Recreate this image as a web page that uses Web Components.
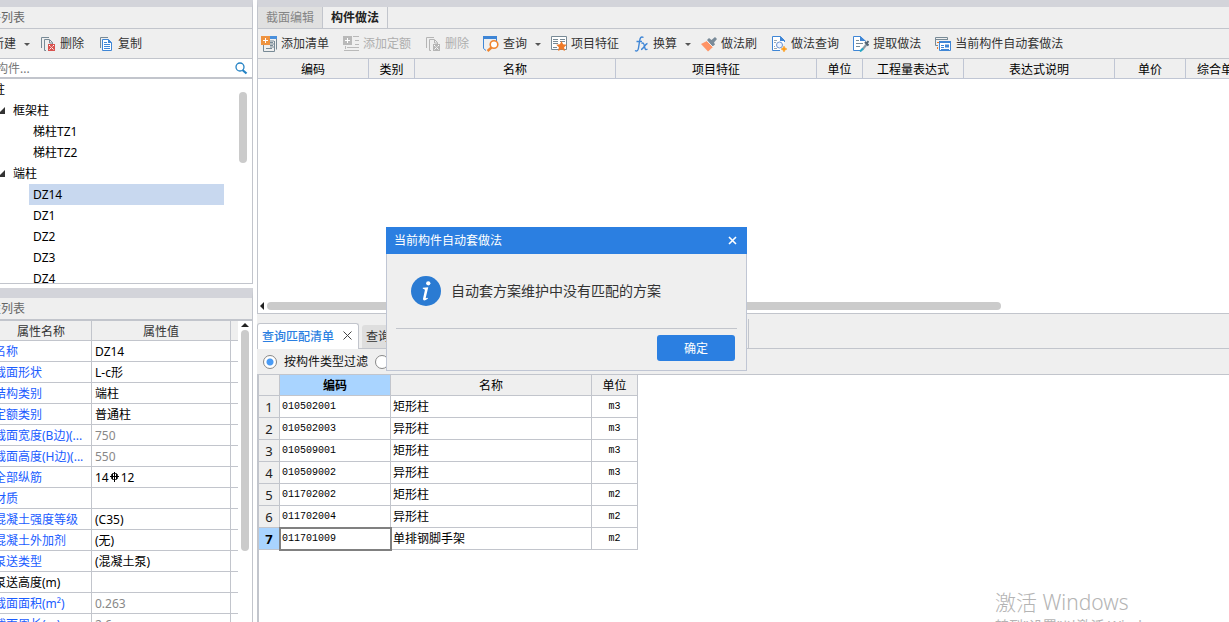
<!DOCTYPE html>
<html lang="zh-CN">
<head>
<meta charset="utf-8">
<title>构件做法</title>
<style>
  body {
    --bar: #d3d4da;
    --panel: #efefef;
    --line: #c2c5cc;
    --grid: #c0c6d4;
    --accent: #2b7fe1;
    --thumb: #cbcbcb;
    margin: 0;
    overflow: hidden;
    background: #fff;
    color: #333;
    font: 12px/20px "Noto Sans", "Noto Sans CJK SC", sans-serif;
  }
</style>
</head>
<body>
<takeoff-app></takeoff-app>

<script>
const ICONS = {
  'add-list': `
    <path d="M9 1.5h6.5v10M13 5H9M13 8H9M13 11H9" fill="none" stroke="#788a96"/>
    <path d="M9 0h7v3H9z" fill="#4a90dc"/>
    <path d="M2.5 9v6.5h11V5M15.5 4v9.5" fill="none" stroke="#788a96"/>
    <path d="M5 12.5h6M9 9.5h3M9 6.5h3" stroke="#788a96"/>
    <path d="M0 0h9v9H0z" fill="#ef9340"/>
    <path d="M4.5 2v5M2 4.5h5" stroke="#fff"/>`,
  'add-quota': `
    <path d="M0 0h9v9H0z" fill="#b9b9b9"/>
    <path d="M4.5 2v5M2 4.5h5" stroke="#fff"/>
    <path d="M10 .5h6M12 4.5h4M12 8.5h4M4 11.5h12M1 14.5h15M2.5 10v3" stroke="#b9b9b9" fill="none"/>`,
  remove: `
    <path d="M1.5 12V1.5H9" fill="none" stroke="#788a96"/>
    <path d="M6 14.5H4.5v-11h5l3 3V8M9.5 4v3h3" fill="none" stroke="#788a96"/>
    <path d="M8 8h7v7H8z" fill="#d9534f"/>
    <path d="M9 9l5 5M14 9l-5 5" stroke="#fff" stroke-dasharray="1.4 .7"/>`,
  'remove-off': `
    <path d="M1.5 12V1.5H9" fill="none" stroke="#b5b5b5"/>
    <path d="M6 14.5H4.5v-11h5l3 3V8M9.5 4v3h3" fill="none" stroke="#b5b5b5"/>
    <path d="M8 8h7v7H8z" fill="#b5b5b5"/>
    <path d="M9 9l5 5M14 9l-5 5" stroke="#fff" stroke-dasharray="1.4 .7"/>`,
  copy: `
    <path d="M2.5 12V1.5H10" fill="none" stroke="#788a96"/>
    <path d="M4.5 3.5h6l3 3v8h-9z" fill="#fff" stroke="#3f86d6"/>
    <path d="M10 3v4h4z" fill="#3f86d6"/>
    <path d="M6 6.5h3M6 8.5h6M6 10.5h6M6 12.5h6" stroke="#3f86d6"/>`,
  query: `
    <path d="M0 0h14v3H0z" fill="#3f86d6"/>
    <path d="M.5 3v9.5L3 14.5M13.5 3v2" fill="none" stroke="#3f86d6"/>
    <circle cx="11" cy="8.5" r="3.8" fill="#fff" stroke="#f0852f" stroke-width="1.6"/>
    <path d="M8.5 11.5L4.500 15" stroke="#f0852f" stroke-width="2.4"/>`,
  feature: `
    <path d="M.5.5h15v13H.5z" fill="#fff" stroke="#788a96"/>
    <path d="M2 3.5h5M2 5.5h5M2 7.5h5M2 11.5h4M9 3.5h5M9 5.5h5" stroke="#788a96"/>
    <path d="M10.5 5l1.6 3.3 3.7.4-2.7 2.5.8 3.7-3.4-1.7L7.100 15l.8-3.8L5.200 8.700l3.7-.4z" fill="#ef7a28"/>`,
  convert: `
    <path d="M10.5 1.500C8 0 7 2 6.600 5L5.500 12c-.4 3-1.8 3.5-3.5 2.5M3.500 5.500H9" fill="none" stroke="#3f86d6" stroke-width="1.4"/>
    <path d="M8.5 7.500c2-1.500 2.500.5 3 3s1 4 3 2.500M14.500 7.500c-2 0-4.500 6-6.500 6" fill="none" stroke="#3f86d6" stroke-width="1.3"/>`,
  brush: `
    <path d="M0 8l6-3 6 6-5 4.500z" fill="#ff9466"/>
    <path d="M6 4l2-2 2.500 2L14 1l2 2-3 3.500 1 2-2.500 2z" fill="#7a8b99"/>
    <path d="M5.500 4.500l6.500 6.500" stroke="#efefef"/>`,
  'method-query': `
    <path d="M13.500 6V4.500l-4-4h-8v14H9" fill="#fff" stroke="#3f86d6"/>
    <path d="M9 0v5h5z" fill="#3f86d6"/>
    <path d="M3 4.500h3M3 6.500h2M3 10.500h1M3 12.500h3" stroke="#9aa7b1"/>
    <circle cx="8.500" cy="9" r="3" fill="#eef4ff" stroke="#6c93cf"/>
    <path d="M13 10l1 2 2 1-2 1-1 2-1-2-2-1 2-1z" fill="#ff9d18" stroke="#ff9d18" stroke-width=".5"/>`,
  extract: `
    <path d="M8 14.500H.5V.5h7l5 5" fill="#fff" stroke="#3f86d6"/>
    <path d="M7 0v5h6z" fill="#3f86d6"/>
    <path d="M3 4.500h3M3 7.500h7M3 10.500h4" stroke="#788a96"/>
    <path d="M9 14l5-6" stroke="#8b9ba7" stroke-width="2"/>
    <path d="M12 6l3.500 3.500M13.500 7.500L15.500 5" stroke="#536471" stroke-width="2"/>
    <path d="M7 15.500l3-3" stroke="#25a7c7" stroke-width="2"/>`,
  auto: `
    <path d="M12.500 4V1.500H.5v8H3M1 3.500h11" fill="none" stroke="#788a96"/>
    <path d="M2 6.500h2M2.500 11v2" stroke="#ef7a28"/>
    <path d="M4.500 5.500h11v9h-11z" fill="#fff" stroke="#3f86d6"/>
    <path d="M4 5h12v2H4zM10 8.500h4v3h-4z" fill="#3f86d6"/>
    <path d="M6 9.500h3M6 11.500h3M6 13.500h8" stroke="#3f86d6"/>`,
  search: `
    <circle cx="7" cy="7" r="4" fill="none" stroke="#2583c5" stroke-width="1.3"/>
    <path d="M9.500 10l4 3.500" stroke="#2583c5" stroke-width="2.2"/>`,
  rebar: `
    <path d="M7.500 3v10M3 7.500h9M5.500 5v5M9.500 5v5" stroke="#000" fill="none"/>
    <rect x="4.500" y="4.500" width="6" height="6" rx="2" stroke="#000" fill="none"/>`,
  info: `
    <circle cx="8" cy="8" r="8" fill="#2a7bd3"/>
    <circle cx="9.200" cy="3.900" r="1.150" fill="#fff"/>
    <path d="M6.300 6.300l2.900-.3-1.300 5.400q-.2.800.8.200l.4.400q-2.700 2.100-2.700.1l1-4.500q.1-.8-1.100-.8z" fill="#fff"/>`,
};

function define(name, css, html, ready) {
  const template = document.createElement('template');
  template.innerHTML = `<style>* { box-sizing: border-box; } ${css}</style>${html}`;

  customElements.define(name, class extends HTMLElement {
    constructor() {
      super();
      this.attachShadow({ mode: 'open' }).appendChild(template.content.cloneNode(true));
    }

    connectedCallback() {
      if (ready) ready(this, this.shadowRoot);
    }
  });
}

define('ui-icon', `
  :host { display: inline-block; flex: none; width: 16px; height: 16px; }
  svg { display: block; width: 100%; height: 100%; }
`, `<svg viewBox="0 0 16 16" aria-hidden="true"></svg>`, (el, root) => {
  root.querySelector('svg').innerHTML = ICONS[el.getAttribute('name')] || '';
});

define('tool-button', `
  :host { display: block; flex: none; }
  button {
    display: flex;
    align-items: center;
    gap: 4px;
    padding: 0;
    border: 0;
    background: none;
    color: inherit;
    font: inherit;
    white-space: nowrap;
  }
  button:disabled { color: #aeaeae; }
  .caret { display: none; }
  :host([menu]) .caret {
    display: block;
    margin: 2px -4px 0 4px;
    border: 3px solid transparent;
    border-top-color: #555;
    border-bottom: 0;
  }
`, `<button type="button"><span class="icon"></span><slot></slot><span class="caret"></span></button>`, (el, root) => {
  const icon = document.createElement('ui-icon');
  icon.setAttribute('name', el.getAttribute('icon') || '');
  root.querySelector('.icon').replaceWith(icon);
  root.querySelector('button').disabled = el.hasAttribute('disabled');
});

define('tool-bar', `
  :host {
    display: flex;
    flex: none;
    align-items: center;
    gap: 14px;
    height: 30px;
    padding: 0 3px;
    overflow: hidden;
    background: var(--panel);
    border-bottom: 1px solid var(--line);
  }
`, `<slot></slot>`);

define('panel-title', `
  :host {
    display: block;
    flex: none;
    height: 22px;
    padding-left: 9px;
    background: var(--panel);
    border-bottom: 1px solid var(--line);
    color: #666;
    line-height: 22px;
  }
`, `<slot></slot>`);

define('scroll-thumb', `
  :host { display: block; border-radius: 4px; background: var(--thumb); }
`, ``);

define('component-tree', `
  :host { display: flex; flex: 1; min-height: 0; overflow: hidden; color: #000; }
  ul { flex: 1; margin: 0; padding: 0 0 0 61px; list-style: none; }
  li { height: 21px; padding: 0 4px; line-height: 21px; }
  .root { margin-left: -40px; }
  .group { display: flex; align-items: center; gap: 8px; margin-left: -35px; }
  .group::before {
    content: "";
    border-left: 7px solid transparent;
    border-bottom: 7px solid #333;
  }
  .selected { background: #c8d8ef; }
  scroll-thumb { flex: none; width: 8px; height: 71px; margin: 13px 5px 0 15px; }
`, `
  <ul>
    <li class="root">柱</li>
    <li class="group">框架柱</li>
    <li>梯柱TZ1</li>
    <li>梯柱TZ2</li>
    <li class="group">端柱</li>
    <li class="selected">DZ14</li>
    <li>DZ1</li>
    <li>DZ2</li>
    <li>DZ3</li>
    <li>DZ4</li>
  </ul>
  <scroll-thumb></scroll-thumb>
`);

define('component-panel', `
  :host {
    display: flex;
    flex-direction: column;
    min-height: 0;
    border-top: 7px solid var(--bar);
    border-right: 1px solid var(--line);
    border-bottom: 1px solid var(--line);
  }
  .search {
    display: flex;
    flex: none;
    align-items: center;
    height: 20px;
    padding: 0 3px 0 4px;
    border-bottom: 2px solid var(--line);
  }
  input {
    flex: 1;
    height: 18px;
    padding: 2px 0 0;
    border: 0;
    outline: 0;
    background: none;
    font: inherit;
  }
  input::placeholder { color: #777; }
  tool-bar { padding: 0 4px; }
`, `
  <panel-title>构件列表</panel-title>
  <tool-bar>
    <tool-button menu>新建</tool-button>
    <tool-button icon="remove">删除</tool-button>
    <tool-button icon="copy">复制</tool-button>
  </tool-bar>
  <div class="search">
    <input type="text" placeholder="搜索构件..." aria-label="搜索构件">
    <ui-icon name="search"></ui-icon>
  </div>
  <component-tree></component-tree>
`);

const PROPERTIES = [
  ['名称', 'DZ14'],
  ['截面形状', 'L-c形'],
  ['结构类别', '端柱'],
  ['定额类别', '普通柱'],
  ['截面宽度(B边)(...', '750', 'fixed'],
  ['截面高度(H边)(...', '550', 'fixed'],
  ['全部纵筋', '14<ui-icon name="rebar"></ui-icon>12'],
  ['材质', ''],
  ['混凝土强度等级', '(C35)'],
  ['混凝土外加剂', '(无)'],
  ['泵送类型', '(混凝土泵)'],
  ['泵送高度(m)', '', 'plain'],
  ['截面面积(m²)', '0.263', 'fixed'],
  ['截面周长(m)', '2.6', 'fixed'],
];

define('property-panel', `
  :host {
    display: flex;
    flex-direction: column;
    min-height: 0;
    overflow: hidden;
    border-top: 10px solid var(--bar);
    border-right: 1px solid var(--line);
  }
  panel-title { height: 23px; border-bottom-width: 2px; }
  .body { display: flex; min-height: 0; }
  table {
    flex: 1;
    table-layout: fixed;
    border-collapse: separate;
    border-spacing: 0;
    color: #000;
  }
  .no { width: 23px; }
  .name { width: 101px; }
  .end { width: 7px; }
  th, td {
    height: 21px;
    padding: 2px 3px 0;
    border-bottom: 1px solid var(--line);
    line-height: 18px;
    text-align: left;
    font-weight: 400;
    white-space: nowrap;
    overflow: hidden;
  }
  thead th {
    height: 20px;
    line-height: 17px;
    background: var(--panel);
    color: #333;
    text-align: center;
  }
  th:nth-child(2), td:nth-child(3) { border-right: 1px solid var(--line); }
  thead th:nth-child(3) { border-right: 1px solid var(--line); }
  tbody th { color: #1a5cff; }
  .plain th { color: #000; }
  .fixed td { color: #888; }
  td ui-icon { margin: -2px; vertical-align: -1px; }
  .scroll { flex: none; width: 14px; padding: 2px 3px; }
  .scroll::before {
    content: "";
    display: block;
    margin-bottom: 3px;
    border: 4px solid transparent;
    border-top: 0;
    border-bottom-color: #222;
  }
  scroll-thumb { height: 221px; }
`, `
  <panel-title>属性列表</panel-title>
  <div class="body">
    <table>
      <colgroup><col class="no"><col class="name"><col><col class="end"></colgroup>
      <thead><tr><th></th><th>属性名称</th><th>属性值</th><th></th></tr></thead>
      <tbody></tbody>
    </table>
    <div class="scroll"><scroll-thumb></scroll-thumb></div>
  </div>
`, (el, root) => {
  root.querySelector('tbody').innerHTML = PROPERTIES.map(([name, value, kind = '']) =>
    `<tr class="${kind}"><td></td><th scope="row">${name}</th><td>${value}</td><td></td></tr>`).join('');
});

define('method-panel', `
  :host {
    display: flex;
    flex-direction: column;
    min-width: 0;
    min-height: 0;
    border-top: 7px solid var(--bar);
    border-left: 1px solid var(--line);
    border-bottom: 1px solid var(--line);
  }
  nav {
    display: flex;
    flex: none;
    height: 22px;
    background: var(--panel);
    border-bottom: 1px solid var(--line);
  }
  nav button {
    width: 65px;
    padding: 0;
    border: 0;
    border-right: 1px solid var(--line);
    background: #e0e0e0;
    color: #858585;
    font: inherit;
  }
  nav [aria-selected=true] { background: #f0f0f0; color: #222; font-weight: 700; }
  .columns { flex: 1; overflow: hidden; }
  table { width: 999px; table-layout: fixed; border-collapse: separate; border-spacing: 0; }
  th {
    height: 20px;
    padding: 2px 0 0;
    border-right: 1px solid var(--grid);
    border-bottom: 1px solid var(--grid);
    background: var(--panel);
    color: #000;
    font-weight: 400;
    line-height: 17px;
  }
  .scroll { display: flex; flex: none; align-items: center; gap: 3px; height: 15px; padding-left: 2px; }
  .scroll::before {
    content: "";
    border: 4px solid transparent;
    border-left: 0;
    border-right-color: #222;
  }
  scroll-thumb { flex: none; width: 734px; height: 8px; }
`, `
  <nav role="tablist">
    <button type="button" role="tab">截面编辑</button>
    <button type="button" role="tab" aria-selected="true">构件做法</button>
  </nav>
  <tool-bar>
    <tool-button icon="add-list">添加清单</tool-button>
    <tool-button icon="add-quota" disabled>添加定额</tool-button>
    <tool-button icon="remove-off" disabled>删除</tool-button>
    <tool-button icon="query" menu>查询</tool-button>
    <tool-button icon="feature">项目特征</tool-button>
    <tool-button icon="convert" menu>换算</tool-button>
    <tool-button icon="brush">做法刷</tool-button>
    <tool-button icon="method-query">做法查询</tool-button>
    <tool-button icon="extract">提取做法</tool-button>
    <tool-button icon="auto">当前构件自动套做法</tool-button>
  </tool-bar>
  <div class="columns">
    <table>
      <colgroup>
        <col width="111"><col width="46"><col width="201"><col width="201"><col width="46">
        <col width="101"><col width="151"><col width="71"><col width="71">
      </colgroup>
      <thead>
        <tr>
          <th>编码</th><th>类别</th><th>名称</th><th>项目特征</th><th>单位</th>
          <th>工程量表达式</th><th>表达式说明</th><th>单价</th><th>综合单价</th>
        </tr>
      </thead>
    </table>
  </div>
  <div class="scroll"><scroll-thumb></scroll-thumb></div>
`);

const MATCHES = [
  ['010502001', '矩形柱', 'm3'],
  ['010502003', '异形柱', 'm3'],
  ['010509001', '矩形柱', 'm3'],
  ['010509002', '异形柱', 'm3'],
  ['011702002', '矩形柱', 'm2'],
  ['011702004', '异形柱', 'm2'],
  ['011701009', '单排钢脚手架', 'm2'],
];

define('match-panel', `
  :host { display: flex; flex-direction: column; min-width: 0; min-height: 0; overflow: hidden; }
  nav {
    display: flex;
    flex: none;
    height: 35px;
    padding-top: 5px;
    background: var(--panel);
    border-bottom: 1px solid var(--line);
  }
  .tabs {
    display: flex;
    align-items: flex-end;
    gap: 3px;
    width: 492px;
    border-right: 1px solid var(--line);
  }
  .tabs button {
    height: 23px;
    padding: 0 4px;
    border: 0;
    border-radius: 3px 3px 0 0;
    background: #dedede;
    color: #333;
    font: inherit;
  }
  .tabs [aria-selected=true] {
    display: flex;
    align-items: center;
    gap: 9px;
    height: 26px;
    margin-bottom: -1px;
    padding: 0 6px 0 4px;
    border: 1px solid var(--line);
    border-bottom: 0;
    background: #fff;
    color: var(--accent);
    font-weight: 500;
  }
  .tabs svg { width: 9px; height: 9px; margin-bottom: 3px; }
  .filter {
    display: flex;
    flex: none;
    align-items: center;
    gap: 7px;
    height: 26px;
    padding-left: 6px;
    background: var(--panel);
    border-bottom: 1px solid var(--line);
    color: #111;
  }
  input {
    appearance: none;
    flex: none;
    width: 14px;
    height: 14px;
    margin: 0;
    border: 1px solid #888;
    border-radius: 50%;
    background: #fff;
  }
  input:checked { background: radial-gradient(circle, #4a9bf5 3px, #fff 4px); }
  .rows { flex: 1; border-left: 2px solid var(--line); background: #fff; }
  table { width: 379px; table-layout: fixed; border-collapse: separate; border-spacing: 0; color: #000; }
  th, td {
    height: 22px;
    padding: 0 2px;
    border-right: 1px solid var(--line);
    border-bottom: 1px solid var(--line);
    line-height: 20px;
    text-align: left;
    font-weight: 400;
  }
  th { background: var(--panel); text-align: center; }
  thead th { height: 21px; padding-top: 2px; line-height: 18px; }
  thead .current { background: #a9d4ff; font-weight: 700; }
  tbody th { font-size: 13px; color: #222; }
  .code, .unit { font-family: "Liberation Mono", monospace; font-size: 10px; }
  .unit { text-align: center; }
  tbody tr:last-child th { background: #a9d4ff; color: #000; font-weight: 700; }
  tbody tr:last-child .code { outline: 2px solid #808080; outline-offset: -1px; }
`, `
  <nav>
    <div class="tabs" role="tablist">
      <button type="button" role="tab" aria-selected="true">查询匹配清单
        <svg viewBox="0 0 9 9" aria-hidden="true"><path d="M.5.5l8 8M8.500.5l-8 8" stroke="#444"/></svg>
      </button>
      <button type="button" role="tab">查询清单</button>
    </div>
  </nav>
  <div class="filter">
    <input type="radio" name="filter" id="by-type" checked>
    <label for="by-type">按构件类型过滤</label>
    <input type="radio" name="filter" aria-label="按构件属性过滤">
  </div>
  <div class="rows">
    <table>
      <colgroup><col width="21"><col width="111"><col width="201"><col width="46"></colgroup>
      <thead><tr><th></th><th class="current">编码</th><th>名称</th><th>单位</th></tr></thead>
      <tbody></tbody>
    </table>
  </div>
`, (el, root) => {
  root.querySelector('tbody').innerHTML = MATCHES.map(([code, name, unit], index) => `
    <tr>
      <th scope="row">${index + 1}</th>
      <td class="code">${code}</td>
      <td>${name}</td>
      <td class="unit">${unit}</td>
    </tr>`).join('');
});

define('message-dialog', `
  :host { display: block; width: 361px; }
  dialog {
    position: static;
    width: auto;
    margin: 0;
    padding: 0;
    border: 1px solid var(--grid);
    border-top: 0;
    background: var(--panel);
    color: #333;
  }
  header {
    display: flex;
    align-items: center;
    justify-content: space-between;
    height: 27px;
    margin: 0 -1px;
    padding: 0 10px 0 8px;
    background: var(--accent);
    color: #fff;
  }
  header button { display: flex; padding: 0; border: 0; background: none; }
  header svg { width: 9px; height: 9px; }
  .message {
    display: flex;
    align-items: center;
    gap: 10px;
    height: 75px;
    margin: 0 9px;
    padding-left: 15px;
    border-bottom: 1px solid var(--line);
    font-size: 14px;
    line-height: 22px;
  }
  ui-icon { width: 30px; height: 30px; }
  footer { display: flex; justify-content: flex-end; padding: 6px 11px 9px; }
  footer button {
    width: 78px;
    height: 26px;
    padding: 2px 0 0;
    border: 0;
    border-radius: 3px;
    background: var(--accent);
    color: #fff;
    font: inherit;
  }
`, `
  <dialog open>
    <header>
      <span>当前构件自动套做法</span>
      <button type="button" aria-label="关闭">
        <svg viewBox="0 0 9 9"><path d="M1 1l7 7M8 1L1 8" stroke="#fff" stroke-width="1.6"/></svg>
      </button>
    </header>
    <div class="message"><ui-icon name="info"></ui-icon><slot></slot></div>
    <footer><button type="button">确定</button></footer>
  </dialog>
`);

// The window hangs 32px over the left edge of the screen.
define('takeoff-app', `
  :host {
    position: relative;
    display: grid;
    grid-template-columns: 285px minmax(0, 1fr);
    column-gap: 4px;
    height: 100vh;
    margin-left: -32px;
  }
  .side { display: grid; grid-template-rows: 284px minmax(0, 1fr); row-gap: 4px; min-height: 0; }
  .main { display: grid; grid-template-rows: 314px minmax(0, 1fr); min-height: 0; }
  message-dialog { position: absolute; top: 227px; left: 418px; }
  .activate {
    position: absolute;
    top: 588px;
    right: 48px;
    width: 186px;
    color: #b4b4b4;
    font-size: 14px;
    white-space: nowrap;
  }
  .activate strong { display: block; font-size: 21px; font-weight: 300; line-height: 28px; }
`, `
  <div class="side">
    <component-panel></component-panel>
    <property-panel></property-panel>
  </div>
  <div class="main">
    <method-panel></method-panel>
    <match-panel></match-panel>
  </div>
  <message-dialog>自动套方案维护中没有匹配的方案</message-dialog>
  <div class="activate"><strong>激活 Windows</strong>转到"设置"以激活 Windows。</div>
`);
</script>
</body>
</html>
